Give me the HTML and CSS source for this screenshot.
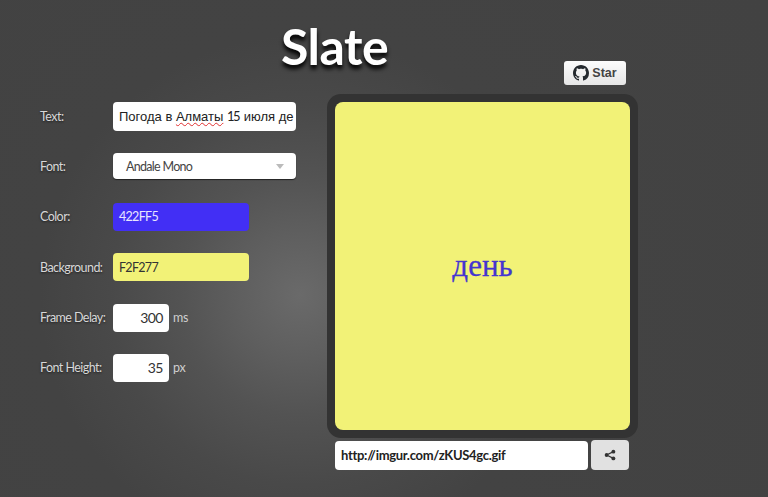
FILE: index.html
```html
<!DOCTYPE html>
<html lang="en">
<head>
<meta charset="utf-8">
<title>Slate</title>
<link rel="stylesheet" href="styles.css">
</head>
<body>
<div class="app">
  <header class="top">
    <h1 class="title">Slate</h1>
    <a class="star"><svg class="gh" viewBox="0 0 16 16"><path d="M8 0C3.58 0 0 3.58 0 8c0 3.54 2.29 6.53 5.47 7.59.4.07.55-.17.55-.38 0-.19-.01-.82-.01-1.49-2.01.37-2.53-.49-2.69-.94-.09-.23-.48-.94-.82-1.13-.28-.15-.68-.52-.01-.53.63-.01 1.08.58 1.23.82.72 1.21 1.87.87 2.33.66.07-.52.28-.87.51-1.07-1.78-.2-3.64-.89-3.64-3.95 0-.87.31-1.59.82-2.15-.08-.2-.36-1.02.08-2.12 0 0 .67-.21 2.2.82.64-.18 1.32-.27 2-.27s1.36.09 2 .27c1.53-1.04 2.2-.82 2.2-.82.44 1.1.16 1.92.08 2.12.51.56.82 1.27.82 2.15 0 3.07-1.87 3.75-3.65 3.95.29.25.54.73.54 1.48 0 1.07-.01 1.93-.01 2.2 0 .21.15.46.55.38A8.01 8.01 0 0 0 16 8c0-4.42-3.58-8-8-8z"/></svg><span>Star</span></a>
  </header>
  <main class="main">
    <form class="form">
      <div class="row"><label class="label">Text:</label><div class="field field-wide field-text"><span>Погода в <span class="misspelt">Алматы</span> <span class="num">15</span> июля де</span></div></div>
      <div class="row"><label class="label">Font:</label><div class="field field-wide field-select"><span>Andale Mono</span><i class="caret"></i></div></div>
      <div class="row"><label class="label">Color:</label><div class="field field-color color-fg">422FF5</div></div>
      <div class="row"><label class="label">Background:</label><div class="field field-color color-bg">F2F277</div></div>
      <div class="row"><label class="label">Frame Delay:</label><div class="field field-num">300</div><span class="unit">ms</span></div>
      <div class="row"><label class="label">Font Height:</label><div class="field field-num">35</div><span class="unit">px</span></div>
    </form>
    <section class="preview">
      <div class="frame"><div class="canvas">день</div></div>
      <div class="share">
        <div class="url">http://imgur.com/zKUS4gc.gif</div>
        <button class="share-btn" type="button"><svg viewBox="0 0 16 16" class="share-icon"><circle cx="12.5" cy="3.5" r="2.6"/><circle cx="12.5" cy="12.5" r="2.6"/><circle cx="3.5" cy="8" r="2.6"/><path d="M12.5 3.5 3.5 8l9 4.5" fill="none" stroke="#333" stroke-width="1.5"/></svg></button>
      </div>
    </section>
  </main>
</div>
</body>
</html>
```
FILE: styles.css
```css
* { box-sizing: border-box; }
html, body { margin: 0; height: 100%; }
body {
  background: radial-gradient(circle at 300px 295px, #6a6a6a 0, #5f5f5f 60px, #535353 120px, #494949 190px, #434343 260px, #424242 100%);
  font-family: "Lato", sans-serif;
  overflow: hidden;
}
.app { width: 768px; height: 497px; }
.top { height: 94px; display: flex; align-items: flex-start; padding-left: 281px; }
.title {
  margin: 10px 0 0;
  width: 108px;
  font: 700 50px/72px "Lato", sans-serif;
  letter-spacing: -.5px;
  color: #fff;
  text-shadow: 0 4px 4px #000;
  white-space: nowrap;
}
.star {
  margin: 61px 0 0 175px;
  width: 62px; height: 24px;
  display: flex; align-items: center; justify-content: center; gap: 3px;
  background: linear-gradient(#fcfcfc, #e6e6e6);
  border-radius: 3px;
  font: 700 12.5px "Liberation Sans", sans-serif;
  color: #444;
}
.gh { width: 16px; height: 16px; fill: #24292e; }
.main { display: flex; align-items: flex-start; padding-left: 40px; }
.form { width: 287px; padding-top: 8px; display: flex; flex-direction: column; gap: 22.4px; }
.row { display: flex; align-items: center; height: 28px; }
.label {
  width: 73px; flex: none;
  font-size: 12.5px;
  letter-spacing: -.55px;
  color: #d8d8d8;
  text-shadow: 0 1px 2px #222;
  white-space: nowrap;
}
.field { height: 28px; border-radius: 4px; background: #fff; display: flex; align-items: center; font-size: 12.5px; letter-spacing: -.7px; white-space: pre; }
.field-wide { width: 183px; }
.field-text { padding-left: 6px; font: 13px/28px "Liberation Sans", sans-serif; letter-spacing: 0; color: #222; height: 29px; }
.misspelt { text-decoration: underline wavy #e03030 1px; text-underline-offset: 1px; }
.num { font-family: "Lato", sans-serif; font-size: 13px; letter-spacing: -1.5px; margin-right: 1px; }
.field-select { height: 26px; padding: 0 13px; justify-content: space-between; color: #444; box-shadow: 0 1px 1px #222; }
.caret { width: 0; height: 0; border: 4px solid transparent; border-top: 5px solid #bbb; border-bottom: 0; margin-right: -1px; }
.field-color { width: 136px; padding-left: 6px; }
.color-fg { background: #422ff5; color: #e8e6ff; }
.color-bg { background: #f2f277; color: #333; }
.field-num { width: 56px; justify-content: flex-end; padding-right: 6px; color: #333; font-size: 14px; letter-spacing: -.5px; }
.unit { margin-left: 4px; font-size: 12.5px; letter-spacing: -.3px; color: #cfcfcf; }
.preview { display: flex; flex-direction: column; width: 311px; }
.frame { width: 311px; height: 344px; padding: 8px; background: #333; border-radius: 14px; }
.canvas {
  width: 295px; height: 328px;
  background: #f2f277; border-radius: 8px;
  display: flex; align-items: center; justify-content: center;
  color: #4535d0;
  font: 31px "Liberation Serif", serif;
  -webkit-text-stroke: .3px #4535d0;
}
.share { display: flex; gap: 3px; margin: 2px 0 0 8px; align-items: flex-start; }
.url {
  margin-top: 1px;
  width: 253px; height: 29px;
  padding-left: 6px;
  background: #fff; border-radius: 4px;
  font-size: 13px; line-height: 29px; font-weight: 700; color: #222;
  letter-spacing: -.3px;
}
.share-btn { width: 38px; height: 30px; padding: 0; border: 0; border-radius: 4px; background: #e1e1e1; display: flex; align-items: center; justify-content: center; }
.share-icon { width: 12px; height: 12px; fill: #333; }
```
